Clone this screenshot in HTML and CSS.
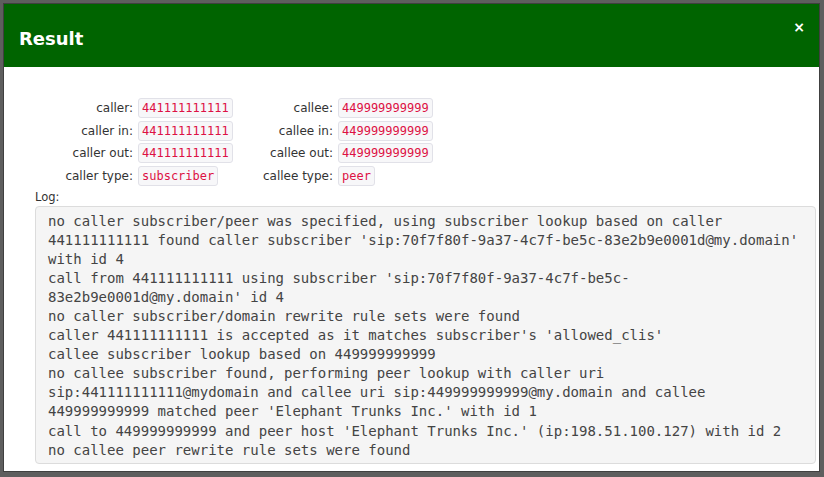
FILE: index.html
```html
<!DOCTYPE html>
<html lang="en">
<head>
  <meta charset="UTF-8">
  <meta name="viewport" content="width=device-width, initial-scale=1.0">
  <title>Result</title>
  <link rel="stylesheet" href="styles.css">
</head>
<body>
  <div class="modal">
    <div class="modal-header">
      <h3>Result</h3>
      <button class="close">×</button>
    </div>

    <div class="modal-body">
      <div class="call-info">
        <span class="label">caller:</span>
        <span class="value"><code>441111111111</code></span>
        <span class="label">callee:</span>
        <span class="value"><code>449999999999</code></span>

        <span class="label">caller in:</span>
        <span class="value"><code>441111111111</code></span>
        <span class="label">callee in:</span>
        <span class="value"><code>449999999999</code></span>

        <span class="label">caller out:</span>
        <span class="value"><code>441111111111</code></span>
        <span class="label">callee out:</span>
        <span class="value"><code>449999999999</code></span>

        <span class="label">caller type:</span>
        <span class="value"><code>subscriber</code></span>
        <span class="label">callee type:</span>
        <span class="value"><code>peer</code></span>
      </div>

      <div class="log">
        <div class="log-title">Log:</div>
<pre>no caller subscriber/peer was specified, using subscriber lookup based on caller
441111111111 found caller subscriber 'sip:70f7f80f-9a37-4c7f-be5c-83e2b9e0001d@my.domain'
with id 4
call from 441111111111 using subscriber 'sip:70f7f80f-9a37-4c7f-be5c-
83e2b9e0001d@my.domain' id 4
no caller subscriber/domain rewrite rule sets were found
caller 441111111111 is accepted as it matches subscriber's 'allowed_clis'
callee subscriber lookup based on 449999999999
no callee subscriber found, performing peer lookup with caller uri
sip:441111111111@mydomain and callee uri sip:449999999999@my.domain and callee
449999999999 matched peer 'Elephant Trunks Inc.' with id 1
call to 449999999999 and peer host 'Elephant Trunks Inc.' (ip:198.51.100.127) with id 2
no callee peer rewrite rule sets were found</pre>
      </div>
    </div>
  </div>
</body>
</html>
```

FILE: styles.css
```css
html, body {
  height: 100%;
}

body {
  font-family: "DejaVu Sans", Verdana, sans-serif;
  margin: 0;
  padding: 3px 4px 5px 3px;
  box-sizing: border-box;
  background: #5e5e5e;
}

.modal {
  position: relative;
  height: 100%;
  box-sizing: border-box;
  background: white;
  border: 1px solid #404040;
}

.modal-header {
  height: 63px;
  box-sizing: border-box;
  padding: 6px 15px 0;
  display: flex;
  align-items: center;
  background: #006400;
}

.modal-header h3 {
  margin: 0;
  font-size: 18px;
  font-weight: bold;
  color: white;
}

.close {
  position: absolute;
  top: 13px;
  right: 14px;
  padding: 0;
  border: none;
  background: none;
  color: white;
  font-family: "DejaVu Sans", sans-serif;
  font-size: 14px;
  font-weight: bold;
  line-height: 20px;
  cursor: pointer;
}

.modal-body {
  padding: 31px 3px 0 0;
}

.call-info {
  display: grid;
  grid-template-columns: 134px 95px 105px auto;
  grid-auto-rows: 20px;
  row-gap: 2.5px;
  align-items: center;
  font-size: 12px;
  color: #333;
}

.call-info .label {
  text-align: right;
  padding-right: 5px;
}

.call-info .value {
  display: flex;
}

code {
  font-family: "DejaVu Sans Mono", monospace;
  font-size: 12px;
  line-height: 14px;
  padding: 2px 3px;
  color: #dd1144;
  background: #f7f7f9;
  border: 1px solid #e1e1e8;
  border-radius: 3px;
  white-space: nowrap;
}

.log {
  margin-left: 31px;
}

.log-title {
  font-size: 11.5px;
  line-height: 16px;
  margin-top: 3px;
  color: #333;
}

.log pre {
  margin: 1px 0 0;
  padding: 5px 12px 3px;
  font-family: "DejaVu Sans Mono", monospace;
  font-size: 14px;
  line-height: 19.1px;
  color: #444;
  background: #f5f5f5;
  border: 1px solid #dcdcdc;
  border-radius: 4px;
  white-space: pre-wrap;
}
```
